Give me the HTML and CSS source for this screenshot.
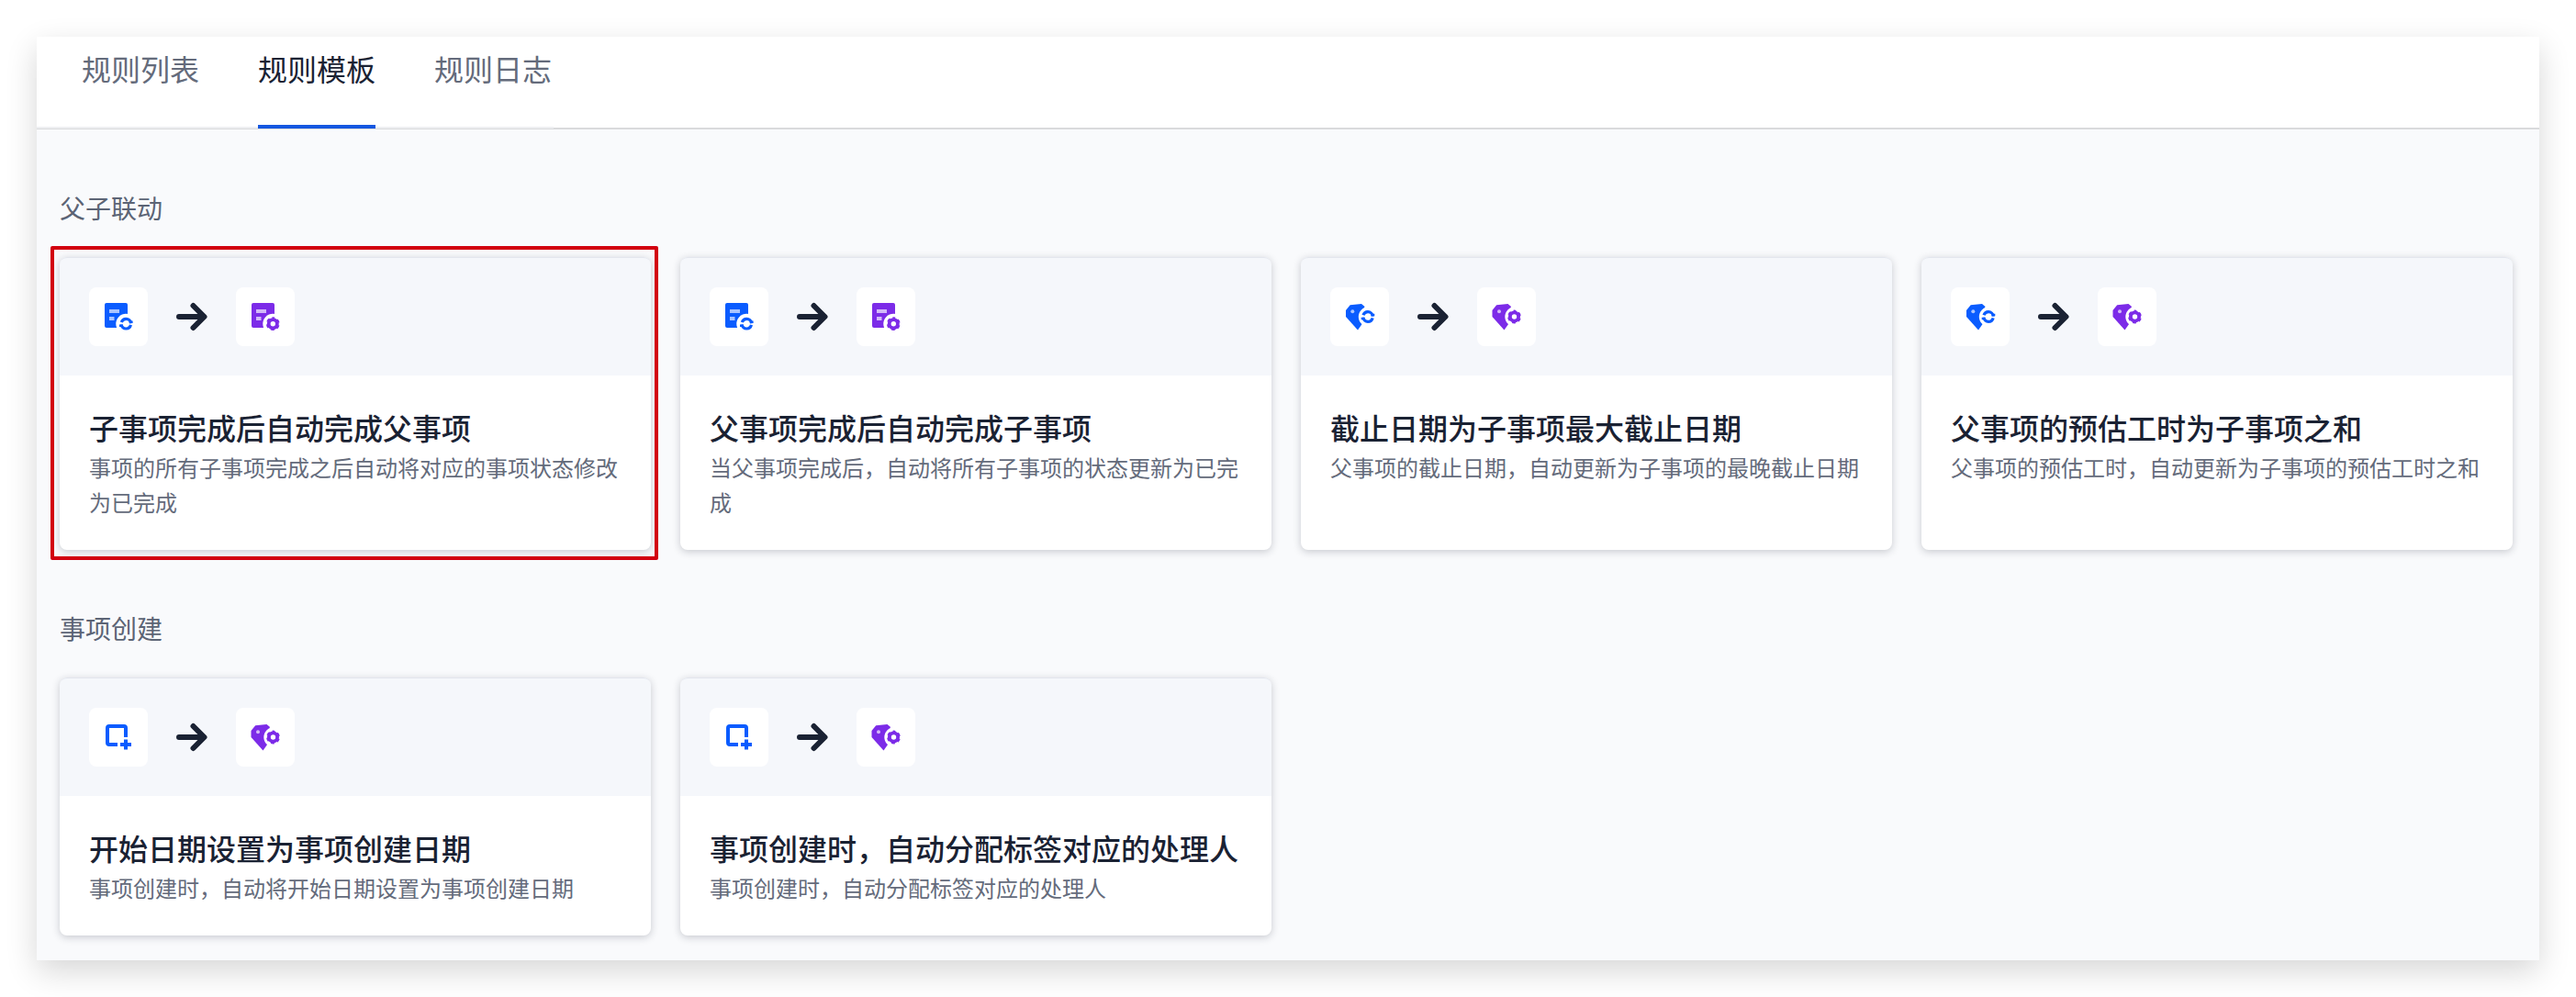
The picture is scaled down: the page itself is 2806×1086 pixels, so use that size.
FILE: index.html
```html
<!DOCTYPE html>
<html lang="zh-CN">
<head>
  <meta charset="UTF-8">
  <meta name="viewport" content="width=device-width, initial-scale=1.0">
  <title>规则模板</title>
  <link rel="stylesheet" href="styles.css">
</head>
<body>

  <!-- Icon set, reused by the cards below -->
  <svg class="icon-defs" aria-hidden="true">
    <g id="sync-mark">
      <circle r="5.3" fill="none" stroke="#0a5cff" stroke-width="3.2" stroke-dasharray="14 2.650" stroke-dashoffset="-1.320"/>
      <path fill="#0a5cff" d="M3.600 -3.200H7.300V-0.800H3.600ZM-3.600 3.200H-7.300V0.800H-3.600Z"/>
    </g>
    <g id="gear-mark">
      <circle r="4.600" fill="none" stroke="#7c2be8" stroke-width="3.800"/>
      <circle r="6.500" fill="none" stroke="#7c2be8" stroke-width="1.800" stroke-dasharray="3.800 3" stroke-dashoffset="1.900" transform="rotate(-90)"/>
    </g>
    <symbol id="ic-doc-sync" viewBox="0 0 64 64">
      <rect x="17" y="17" width="25" height="27" rx="2" fill="#0a5cff"/>
      <rect x="22" y="24" width="11" height="4" fill="#a9c4ff"/>
      <rect x="22" y="32" width="5.500" height="4" fill="#a9c4ff"/>
      <circle cx="40.300" cy="39.700" r="11" fill="#fff"/>
      <use href="#sync-mark" transform="translate(40.300 39.700)"/>
    </symbol>
    <symbol id="ic-doc-gear" viewBox="0 0 64 64">
      <rect x="17" y="17" width="25" height="27" rx="2" fill="#7c2be8"/>
      <rect x="22" y="24" width="11" height="4" fill="#d2b8f8"/>
      <rect x="22" y="32" width="5.500" height="4" fill="#d2b8f8"/>
      <circle cx="40.300" cy="39.700" r="11" fill="#fff"/>
      <use href="#gear-mark" transform="translate(40.300 39.700)"/>
    </symbol>
    <symbol id="ic-tag-sync" viewBox="0 0 64 64">
      <path fill="#0a5cff" d="M17 25L21.700 19.300L34 18L37 20.500L38 24L36 38L30 46.500L17 32Z"/>
      <circle cx="24.300" cy="26.300" r="2" fill="#a9c4ff"/>
      <circle cx="41.500" cy="32" r="10.700" fill="#fff"/>
      <use href="#sync-mark" transform="translate(41 32)"/>
    </symbol>
    <symbol id="ic-tag-gear" viewBox="0 0 64 64">
      <path fill="#7c2be8" d="M16.500 25L21.200 19.300L33.500 18L36.500 20.500L37.500 24L35.500 38L29.500 46.500L16.500 32Z"/>
      <circle cx="24" cy="26.300" r="2" fill="#d2b8f8"/>
      <circle cx="41" cy="32" r="10.700" fill="#fff"/>
      <use href="#gear-mark" transform="translate(40.500 32)"/>
    </symbol>
    <symbol id="ic-plus" viewBox="0 0 64 64">
      <path fill="none" stroke="#0a5cff" stroke-width="4" d="M40 32V22a2 2 0 0 0-2-2H22a2 2 0 0 0-2 2V38a2 2 0 0 0 2 2H31"/>
      <path fill="none" stroke="#0a5cff" stroke-width="4" d="M40 34.500V45.500M34 40H46"/>
    </symbol>
    <symbol id="ic-arrow" viewBox="0 0 34 32">
      <path fill="none" stroke="#1a2233" stroke-width="6" stroke-linecap="round" stroke-linejoin="round" d="M3 16H30M18.500 4L30.500 16L18.500 28"/>
    </symbol>
  </svg>

  <div class="panel">
    <div class="tabs">
      <div class="tab-list">
        <a class="tab" href="#">规则列表</a>
        <a class="tab active" href="#">规则模板</a>
        <a class="tab" href="#">规则日志</a>
      </div>
    </div>

    <div class="content">
      <h2 class="group-title">父子联动</h2>
      <div class="card-grid">
        <div class="card marked">
          <div class="card-head">
            <span class="icon-box"><svg class="icon"><use href="#ic-doc-sync"/></svg></span>
            <svg class="arrow"><use href="#ic-arrow"/></svg>
            <span class="icon-box"><svg class="icon"><use href="#ic-doc-gear"/></svg></span>
          </div>
          <div class="card-body">
            <h3>子事项完成后自动完成父事项</h3>
            <p>事项的所有子事项完成之后自动将对应的事项状态修改为已完成</p>
          </div>
        </div>
        <div class="card">
          <div class="card-head">
            <span class="icon-box"><svg class="icon"><use href="#ic-doc-sync"/></svg></span>
            <svg class="arrow"><use href="#ic-arrow"/></svg>
            <span class="icon-box"><svg class="icon"><use href="#ic-doc-gear"/></svg></span>
          </div>
          <div class="card-body">
            <h3>父事项完成后自动完成子事项</h3>
            <p>当父事项完成后，自动将所有子事项的状态更新为已完成</p>
          </div>
        </div>
        <div class="card">
          <div class="card-head">
            <span class="icon-box"><svg class="icon"><use href="#ic-tag-sync"/></svg></span>
            <svg class="arrow"><use href="#ic-arrow"/></svg>
            <span class="icon-box"><svg class="icon"><use href="#ic-tag-gear"/></svg></span>
          </div>
          <div class="card-body">
            <h3>截止日期为子事项最大截止日期</h3>
            <p>父事项的截止日期，自动更新为子事项的最晚截止日期</p>
          </div>
        </div>
        <div class="card">
          <div class="card-head">
            <span class="icon-box"><svg class="icon"><use href="#ic-tag-sync"/></svg></span>
            <svg class="arrow"><use href="#ic-arrow"/></svg>
            <span class="icon-box"><svg class="icon"><use href="#ic-tag-gear"/></svg></span>
          </div>
          <div class="card-body">
            <h3>父事项的预估工时为子事项之和</h3>
            <p>父事项的预估工时，自动更新为子事项的预估工时之和</p>
          </div>
        </div>
      </div>

      <h2 class="group-title second">事项创建</h2>
      <div class="card-grid">
        <div class="card">
          <div class="card-head">
            <span class="icon-box"><svg class="icon"><use href="#ic-plus"/></svg></span>
            <svg class="arrow"><use href="#ic-arrow"/></svg>
            <span class="icon-box"><svg class="icon"><use href="#ic-tag-gear"/></svg></span>
          </div>
          <div class="card-body">
            <h3>开始日期设置为事项创建日期</h3>
            <p>事项创建时，自动将开始日期设置为事项创建日期</p>
          </div>
        </div>
        <div class="card">
          <div class="card-head">
            <span class="icon-box"><svg class="icon"><use href="#ic-plus"/></svg></span>
            <svg class="arrow"><use href="#ic-arrow"/></svg>
            <span class="icon-box"><svg class="icon"><use href="#ic-tag-gear"/></svg></span>
          </div>
          <div class="card-body">
            <h3>事项创建时，自动分配标签对应的处理人</h3>
            <p>事项创建时，自动分配标签对应的处理人</p>
          </div>
        </div>
      </div>
    </div>
  </div>

</body>
</html>
```

FILE: styles.css
```css
body {
  font-family: 'Noto Sans CJK SC', 'Noto Sans', sans-serif;
  background-color: #fff;
  margin: 0;
  padding: 40px;
  overflow: hidden;
}

.icon-defs {
  position: absolute;
  width: 0;
  height: 0;
}

.panel {
  background-color: #f9fafc;
  box-shadow: 0 12px 32px rgba(0, 0, 0, 0.16);
}

.tabs {
  background-color: #fff;
  height: 99px;
  border-bottom: 2px solid #d9dadc;
}

.tab-list {
  display: flex;
  gap: 64px;
  width: max-content;
  height: 100px;
  padding-left: 49px;
  padding-right: 2px;
  box-sizing: border-box;
  border-bottom: 2px solid #eeeff1;
}

.tab {
  display: block;
  box-sizing: border-box;
  height: 100px;
  padding-top: 12px;
  font-size: 32px;
  line-height: 44px;
  color: #646b7b;
  text-decoration: none;
  position: relative;
}

.tab.active {
  color: #1a2233;
  border-bottom: 4px solid #1557e0;
}

.content {
  padding: 64px 29px 27px 25px;
}

.group-title {
  margin: 0;
  font-size: 28px;
  font-weight: 400;
  line-height: 42px;
  color: #5c6475;
  height: 75px;
}

.group-title.second {
  margin-top: 64px;
}

.card-grid {
  display: grid;
  grid-template-columns: repeat(4, 644px);
  gap: 32px;
}

.card {
  background-color: #fff;
  border-radius: 8px;
  box-shadow: 0 2px 8px rgba(26, 34, 51, 0.22);
  position: relative;
}

/* red annotation frame drawn over the first card */
.card.marked::after {
  content: '';
  position: absolute;
  top: -12px;
  left: -10px;
  right: -8px;
  bottom: -11px;
  border: 4px solid #d2000f;
  border-radius: 2px;
}

.card-head {
  display: flex;
  align-items: center;
  gap: 31px;
  height: 129px;
  padding-left: 32px;
  background-color: #f5f7fb;
  border-radius: 8px 8px 0 0;
  border-top: 1px solid #e3e6ee;
  box-sizing: border-box;
}

.icon-box {
  display: block;
  width: 64px;
  height: 64px;
  background-color: #fff;
  border-radius: 8px;
}

.icon {
  display: block;
  width: 64px;
  height: 64px;
}

.arrow {
  display: block;
  width: 34px;
  height: 32px;
}

.card-body {
  padding: 34px 32px 33px;
}

.card-body h3 {
  margin: 0 0 3px;
  font-size: 32px;
  font-weight: 500;
  line-height: 44px;
  color: #1a2233;
  white-space: nowrap;
}

.card-body p {
  margin: 0;
  font-size: 24px;
  line-height: 38px;
  color: #646b7b;
}
```
